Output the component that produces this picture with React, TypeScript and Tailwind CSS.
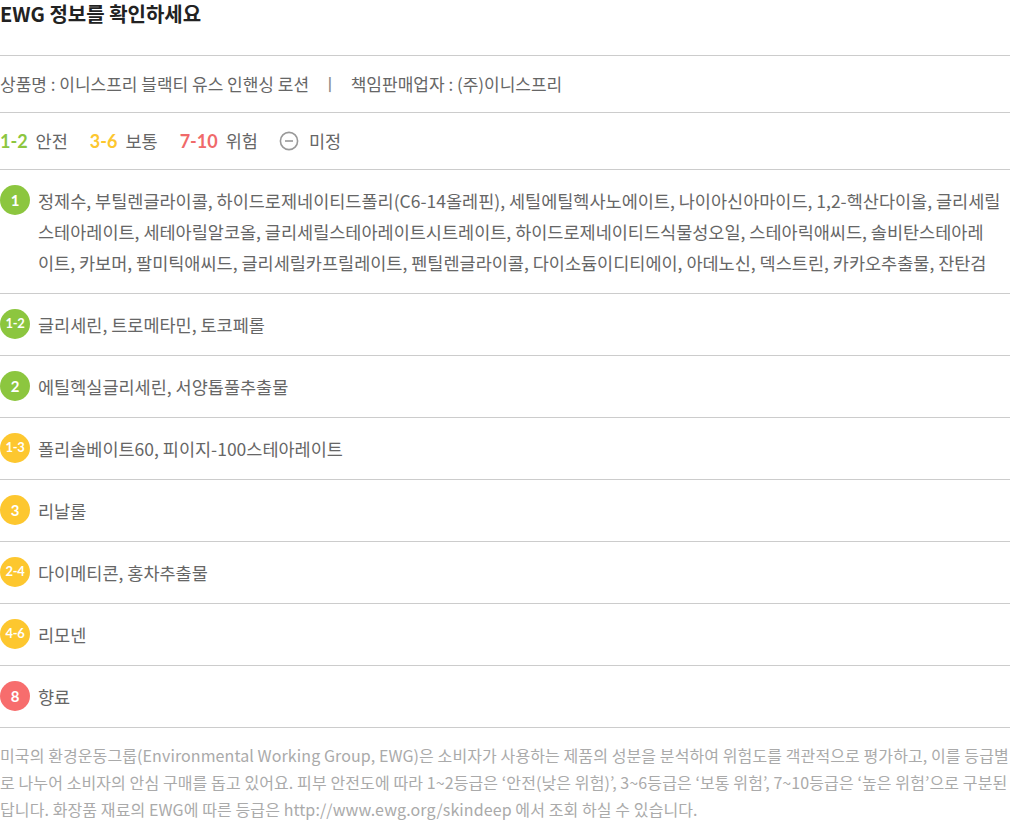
import { Fragment, ReactNode } from "react";

type Grade = "safe" | "normal" | "danger";

const badgeColor: Record<Grade, string> = {
  safe: "bg-[#8cc63f]",
  normal: "bg-[#fdc72f]",
  danger: "bg-[#f76d6d]",
};

// lines are broken where the reference breaks them
const items: { score: string; grade: Grade; lines: string[] }[] = [
  {
    score: "1",
    grade: "safe",
    lines: [
      "정제수, 부틸렌글라이콜, 하이드로제네이티드폴리(C6-14올레핀), 세틸에틸헥사노에이트, 나이아신아마이드, 1,2-헥산다이올, 글리세릴",
      "스테아레이트, 세테아릴알코올, 글리세릴스테아레이트시트레이트, 하이드로제네이티드식물성오일, 스테아릭애씨드, 솔비탄스테아레",
      "이트, 카보머, 팔미틱애씨드, 글리세릴카프릴레이트, 펜틸렌글라이콜, 다이소듐이디티에이, 아데노신, 덱스트린, 카카오추출물, 잔탄검",
    ],
  },
  { score: "1-2", grade: "safe", lines: ["글리세린, 트로메타민, 토코페롤"] },
  { score: "2", grade: "safe", lines: ["에틸헥실글리세린, 서양톱풀추출물"] },
  { score: "1-3", grade: "normal", lines: ["폴리솔베이트60, 피이지-100스테아레이트"] },
  { score: "3", grade: "normal", lines: ["리날룰"] },
  { score: "2-4", grade: "normal", lines: ["다이메티콘, 홍차추출물"] },
  { score: "4-6", grade: "normal", lines: ["리모넨"] },
  { score: "8", grade: "danger", lines: ["향료"] },
];

const notice = [
  "미국의 환경운동그룹(Environmental Working Group, EWG)은 소비자가 사용하는 제품의 성분을 분석하여 위험도를 객관적으로 평가하고, 이를 등급별",
  "로 나누어 소비자의 안심 구매를 돕고 있어요. 피부 안전도에 따라 1~2등급은 ‘안전(낮은 위험)’, 3~6등급은 ‘보통 위험’, 7~10등급은 ‘높은 위험’으로 구분된",
  "답니다. 화장품 재료의 EWG에 따른 등급은 http://www.ewg.org/skindeep 에서 조회 하실 수 있습니다.",
];

const latin = { fontFamily: "Lato, 'Noto Sans', sans-serif" };

function Badge({ score, grade }: { score: string; grade: Grade }) {
  return (
    <span
      className={`${badgeColor[grade]} flex h-[30px] w-[30px] shrink-0 items-center justify-center rounded-full font-bold text-white ${
        score.length > 1 ? "text-[13px] tracking-[-0.3px]" : "text-[15px]"
      }`}
      style={latin}
    >
      {score}
    </span>
  );
}

function Row({ children, className = "" }: { children: ReactNode; className?: string }) {
  return <div className={`border-b border-[#cccccc] ${className}`}>{children}</div>;
}

function Lines({ lines }: { lines: string[] }) {
  return (
    <>
      {lines.map((l, i) => (
        <Fragment key={i}>
          {i > 0 && <br />}
          {l}
        </Fragment>
      ))}
    </>
  );
}

export default function App() {
  return (
    <div
      className="w-[1010px] bg-white text-[#666666]"
      style={{ fontFamily: "'Noto Sans CJK KR', 'Noto Sans', sans-serif" }}
    >
      <Row className="h-[56px]">
        <h2 className="text-[20px] leading-[28px] font-bold text-[#222222]">
          EWG 정보를 확인하세요
        </h2>
      </Row>

      <Row className="flex h-[57px] items-center text-[17px]">
        <span>상품명 : 이니스프리 블랙티 유스 인핸싱 로션</span>
        <span className="mx-[13px] text-[#888888]">ㅣ</span>
        <span>책임판매업자 : (주)이니스프리</span>
      </Row>

      <Row className="flex h-[57px] items-center text-[17.5px]">
        <span className="mr-[8px] text-[18px] font-bold text-[#8cc63f]" style={latin}>
          1-2
        </span>
        <span className="mr-[22px]">안전</span>
        <span className="mr-[8px] text-[18px] font-bold text-[#fdc72f]" style={latin}>
          3-6
        </span>
        <span className="mr-[22px]">보통</span>
        <span className="mr-[8px] text-[18px] font-bold text-[#f06a6a]" style={latin}>
          7-10
        </span>
        <span className="mr-[21px]">위험</span>
        <svg width="20" height="20" viewBox="0 0 20 20" className="mr-[10px]">
          <circle cx="10" cy="10" r="8.6" fill="none" stroke="#999999" strokeWidth="1.6" />
          <line x1="6" y1="10" x2="14" y2="10" stroke="#999999" strokeWidth="1.6" />
        </svg>
        <span>미정</span>
      </Row>

      {items.map((it) => (
        <Row key={it.score + it.lines[0]} className="flex gap-[8px] py-[15px]">
          <Badge score={it.score} grade={it.grade} />
          <p className="text-[17.5px] leading-[31px]">
            <Lines lines={it.lines} />
          </p>
        </Row>
      ))}

      <p className="pt-[14px] text-[16px] leading-[27px] tracking-[0.1px] text-[#aaaaaa]">
        <Lines lines={notice} />
      </p>
    </div>
  );
}
